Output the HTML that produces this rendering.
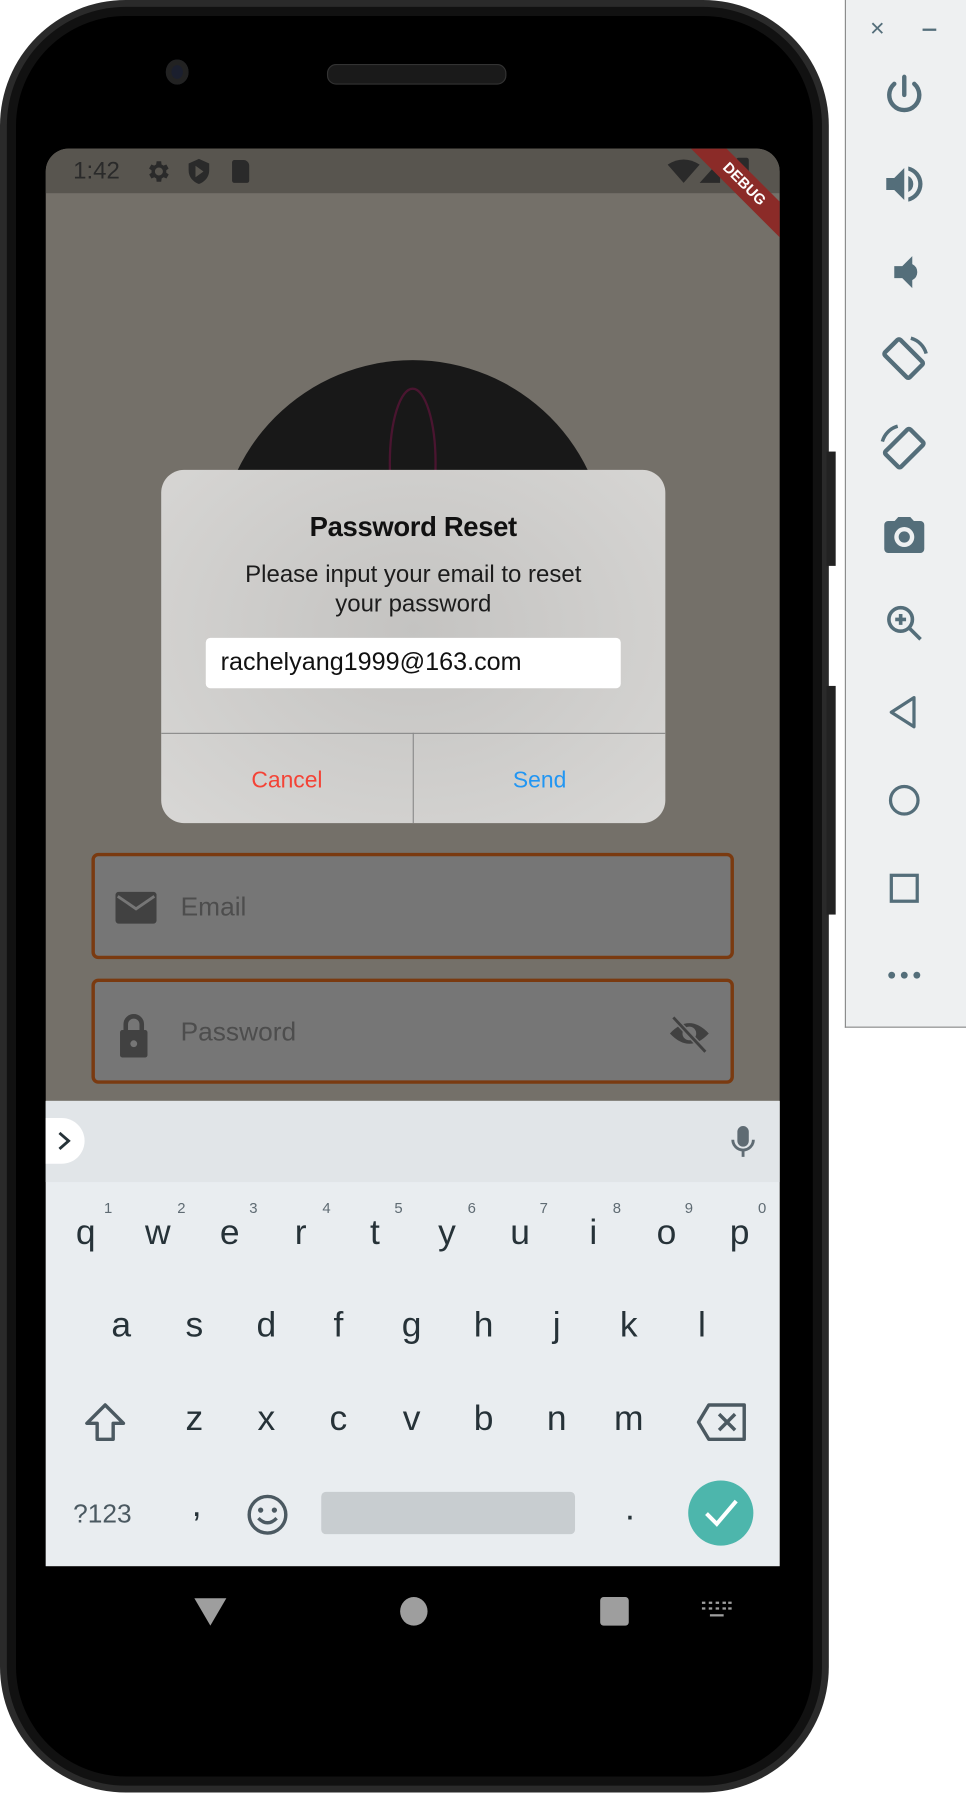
<!DOCTYPE html>
<html><head><meta charset="utf-8"><style>
html,body{margin:0;padding:0;background:#fff;width:966px;height:1792px;overflow:hidden}
#w{position:absolute;left:0;top:0;width:845px;height:1568px;transform:scale(1.14320);transform-origin:0 0;font-family:"Liberation Sans",sans-serif}
.a{position:absolute}
.k{position:absolute;font-size:31px;color:#263238;transform:translateX(-50%);line-height:1}
.n{position:absolute;font-size:13px;color:#5f6b73;line-height:1}
</style></head><body><div id="w">
<div class="a" style="left:0;top:0;width:725px;height:1568px;border-radius:110px;background:#2a2a2a"></div>
<div class="a" style="left:6px;top:6px;width:713px;height:1556px;border-radius:104px;background:#111"></div>
<div class="a" style="left:14px;top:14px;width:697px;height:1540px;border-radius:96px;background:#000"></div>
<div class="a" style="left:723px;top:395px;width:8px;height:100px;background:#222"></div>
<div class="a" style="left:723px;top:600px;width:8px;height:200px;background:#222"></div>
<div class="a" style="left:145px;top:52px;width:20px;height:22px;border-radius:50%;background:#1b1f2e;box-shadow:inset 0 0 0 5px #222"></div>
<div class="a" style="left:286px;top:56px;width:155px;height:16px;border-radius:8px;background:#1a1a1a;border:1px solid #333"></div>
<div class="a" style="left:40px;top:130px;width:642px;height:1240px;border-radius:20px 20px 0 0;background:#747069;overflow:hidden">
 <div class="a" style="left:0;top:0;width:642px;height:39px;background:#58554f"></div>
 <div class="a" style="left:24px;top:8px;font-size:21px;color:#2a2a2a">1:42</div>
 <svg class="a" style="left:86px;top:8px" width="24" height="24" viewBox="0 0 24 24"><path fill="#2a2a2a" d="M19.4 13a7.5 7.5 0 000-2l2.1-1.6-2-3.5-2.5 1a7.3 7.3 0 00-1.7-1L15 3h-4l-.4 2.9a7.3 7.3 0 00-1.7 1l-2.5-1-2 3.5L6.6 11a7.5 7.5 0 000 2l-2.1 1.6 2 3.5 2.5-1a7.3 7.3 0 001.7 1L11 21h4l.4-2.9a7.3 7.3 0 001.7-1l2.5 1 2-3.5zM13 15.5a3.5 3.5 0 110-7 3.5 3.5 0 010 7z"/></svg>
 <svg class="a" style="left:123px;top:8px" width="22" height="24" viewBox="0 0 22 24"><path fill="#2a2a2a" d="M11 1L2 5v6c0 6 4 10 9 12 5-2 9-6 9-12V5zM8 7l7 5-7 5z"/></svg>
 <div class="a" style="left:163px;top:10px;width:15px;height:20px;background:#2a2a2a;border-radius:2px 5px 2px 2px"></div>
 <svg class="a" style="left:544px;top:8px" width="30" height="24"><path fill="#2a2a2a" d="M0 6Q14-3 28 6L14 22z"/></svg>
 <svg class="a" style="left:572px;top:8px" width="18" height="24"><path fill="#2a2a2a" d="M18 2V22H0z"/></svg>
 <div class="a" style="left:604px;top:8px;width:11px;height:22px;background:#2a2a2a;border-radius:2px"></div>
 <div class="a" style="left:531px;top:20px;width:160px;height:22px;background:#8b2b28;transform:rotate(45deg);transform-origin:50% 50%;"><div style="text-align:center;font-size:13px;font-weight:bold;color:#fff;line-height:22px">DEBUG</div></div>
 <div class="a" style="left:151px;top:185px;width:340px;height:340px;border-radius:50%;background:#181818"></div>
 <svg class="a" style="left:190px;top:200px" width="280" height="120"><ellipse cx="131" cy="75" rx="20" ry="65" fill="none" stroke="#4a1530" stroke-width="2"/><ellipse cx="60" cy="100" rx="50" ry="14" fill="none" stroke="#25214a" stroke-width="2"/><ellipse cx="210" cy="100" rx="50" ry="14" fill="none" stroke="#1f3a2a" stroke-width="2"/></svg>
 <div class="a" style="left:40px;top:616px;width:556px;height:87px;border:3px solid #7a3a10;border-radius:6px;background:#767676"></div>
 <svg class="a" style="left:61px;top:650px" width="36" height="28" viewBox="0 0 36 28"><rect width="36" height="28" rx="3" fill="#414141"/><path d="M2 4l16 11 16-11" fill="none" stroke="#767676" stroke-width="2.5"/></svg>
 <div class="a" style="left:118px;top:650px;font-size:23px;color:#4d4d4d">Email</div>
 <div class="a" style="left:40px;top:726px;width:556px;height:86px;border:3px solid #7a3a10;border-radius:6px;background:#767676"></div>
 <svg class="a" style="left:64px;top:756px" width="26" height="40" viewBox="0 0 26 40"><path d="M6 16V10a7 7 0 0114 0v6" fill="none" stroke="#414141" stroke-width="4"/><rect x="1" y="15" width="24" height="24" rx="2" fill="#414141"/><circle cx="13" cy="27" r="3" fill="#767676"/></svg>
 <div class="a" style="left:118px;top:759px;font-size:23px;color:#4d4d4d">Password</div>
 <svg class="a" style="left:544px;top:756px" width="38" height="36" viewBox="0 0 38 36"><path d="M2 18Q19 0 36 18Q19 36 2 18z" fill="#414141"/><circle cx="19" cy="18" r="6" fill="#767676"/><path d="M5 4l28 30" stroke="#767676" stroke-width="5"/><path d="M5 4l28 30" stroke="#414141" stroke-width="2.5"/></svg>
</div>
<div class="a" style="left:141px;top:411px;width:441px;height:309px;border-radius:20px;background:radial-gradient(ellipse at 50% 45%,#c4c3c1 0%,#d0cfcd 60%,#d8d7d5 100%);overflow:hidden">
 <div class="a" style="left:0;width:441px;top:37px;text-align:center;font-size:24px;font-weight:bold;color:#111;letter-spacing:-0.3px">Password Reset</div>
 <div class="a" style="left:0;width:441px;top:79px;text-align:center;font-size:21px;line-height:26px;color:#1c1c1c">Please input your email to reset<br>your password</div>
 <div class="a" style="left:39px;top:147px;width:363px;height:44px;background:#fff;border-radius:4px"></div>
 <div class="a" style="left:52px;top:155px;font-size:22px;color:#111">rachelyang1999@163.com</div>
 <div class="a" style="left:0;top:230px;width:441px;height:1px;background:#8a8a8a"></div>
 <div class="a" style="left:220px;top:230px;width:1px;height:79px;background:#8a8a8a"></div>
 <div class="a" style="left:0;width:220px;top:261px;text-align:center;font-size:20px;color:#f44336">Cancel</div>
 <div class="a" style="left:221px;width:220px;top:261px;text-align:center;font-size:20px;color:#2196f3">Send</div>
</div>
<div class="a" style="left:40px;top:963px;width:642px;height:407px;background:#e9edf0"></div>
<div class="a" style="left:40px;top:963px;width:642px;height:71px;background:#e1e5e8"></div>
<div class="a" style="left:40px;top:978px;width:34px;height:40px;background:#fff;border-radius:0 20px 20px 0"></div>
<svg class="a" style="left:48px;top:988px" width="16" height="20"><path d="M4 3l8 7-8 7" fill="none" stroke="#263238" stroke-width="2.5"/></svg>
<svg class="a" style="left:638px;top:983px" width="24" height="32" viewBox="0 0 24 32"><rect x="7" y="2" width="10" height="18" rx="5" fill="#5f6b73"/><path d="M3 14a9 9 0 0018 0M12 23v6" fill="none" stroke="#5f6b73" stroke-width="2.5"/></svg>
<div class="k" style="left:75px;top:1062px">q</div><div class="n" style="left:91px;top:1050px">1</div>
<div class="k" style="left:138px;top:1062px">w</div><div class="n" style="left:155px;top:1050px">2</div>
<div class="k" style="left:201px;top:1062px">e</div><div class="n" style="left:218px;top:1050px">3</div>
<div class="k" style="left:263px;top:1062px">r</div><div class="n" style="left:282px;top:1050px">4</div>
<div class="k" style="left:328px;top:1062px">t</div><div class="n" style="left:345px;top:1050px">5</div>
<div class="k" style="left:391px;top:1062px">y</div><div class="n" style="left:409px;top:1050px">6</div>
<div class="k" style="left:455px;top:1062px">u</div><div class="n" style="left:472px;top:1050px">7</div>
<div class="k" style="left:519px;top:1062px">i</div><div class="n" style="left:536px;top:1050px">8</div>
<div class="k" style="left:583px;top:1062px">o</div><div class="n" style="left:599px;top:1050px">9</div>
<div class="k" style="left:647px;top:1062px">p</div><div class="n" style="left:663px;top:1050px">0</div>
<div class="k" style="left:106px;top:1143px">a</div><div class="k" style="left:170px;top:1143px">s</div><div class="k" style="left:233px;top:1143px">d</div><div class="k" style="left:296px;top:1143px">f</div><div class="k" style="left:360px;top:1143px">g</div><div class="k" style="left:423px;top:1143px">h</div><div class="k" style="left:487px;top:1143px">j</div><div class="k" style="left:550px;top:1143px">k</div><div class="k" style="left:614px;top:1143px">l</div>
<svg class="a" style="left:72px;top:1225px" width="40" height="40" viewBox="0 0 40 40"><path d="M20 4L4 20h9v14h14V20h9z" fill="none" stroke="#4b5961" stroke-width="3" stroke-linejoin="round"/></svg>
<div class="k" style="left:170px;top:1225px">z</div><div class="k" style="left:233px;top:1225px">x</div><div class="k" style="left:296px;top:1225px">c</div><div class="k" style="left:360px;top:1225px">v</div><div class="k" style="left:423px;top:1225px">b</div><div class="k" style="left:487px;top:1225px">n</div><div class="k" style="left:550px;top:1225px">m</div>
<svg class="a" style="left:608px;top:1226px" width="46" height="36" viewBox="0 0 46 36"><path d="M12 3h31v30H12L3 18z" fill="none" stroke="#4b5961" stroke-width="3" stroke-linejoin="round"/><path d="M21 11l14 14M35 11L21 25" stroke="#4b5961" stroke-width="3"/></svg>
<div class="a" style="left:64px;top:1311px;font-size:23px;color:#4b5961">?123</div>
<div class="k" style="left:172px;top:1300px">,</div>
<svg class="a" style="left:215px;top:1306px" width="38" height="38" viewBox="0 0 38 38"><circle cx="19" cy="19" r="16" fill="none" stroke="#4b5961" stroke-width="3"/><circle cx="13" cy="15" r="2.3" fill="#4b5961"/><circle cx="25" cy="15" r="2.3" fill="#4b5961"/><path d="M11 22q8 8 16 0" fill="none" stroke="#4b5961" stroke-width="3"/></svg>
<div class="a" style="left:281px;top:1305px;width:222px;height:37px;background:#c8cdd0;border-radius:4px"></div>
<div class="k" style="left:551px;top:1303px">.</div>
<div class="a" style="left:602px;top:1295px;width:57px;height:57px;border-radius:50%;background:#4db6ac"></div>
<svg class="a" style="left:614px;top:1308px" width="34" height="30"><path d="M4 16l9 9L30 5" fill="none" stroke="#fff" stroke-width="3.5"/></svg>
<svg class="a" style="left:170px;top:1396px" width="30" height="28"><path d="M0 2h28L14 26z" fill="#9e9e9e"/></svg>
<div class="a" style="left:350px;top:1397px;width:24px;height:25px;border-radius:50%;background:#9e9e9e"></div>
<div class="a" style="left:525px;top:1397px;width:25px;height:25px;border-radius:3px;background:#9e9e9e"></div>
<svg class="a" style="left:613px;top:1400px" width="28" height="18"><g fill="#9e9e9e"><rect x="1" y="1" width="3" height="2"/><rect x="7" y="1" width="3" height="2"/><rect x="13" y="1" width="3" height="2"/><rect x="19" y="1" width="3" height="2"/><rect x="24" y="1" width="3" height="2"/><rect x="1" y="6" width="3" height="2"/><rect x="7" y="6" width="3" height="2"/><rect x="13" y="6" width="3" height="2"/><rect x="19" y="6" width="3" height="2"/><rect x="24" y="6" width="3" height="2"/><rect x="8" y="12" width="12" height="2"/></g></svg>
<div class="a" style="left:739px;top:0;width:105px;height:898px;background:#eef0f1;border:1px solid #8a8a8a;border-top:none"></div>
<div class="a" style="left:761px;top:12px;font-size:22px;color:#546e7a">×</div>
<div class="a" style="left:807px;top:25px;width:12px;height:2px;background:#546e7a"></div>
<svg class="a" style="left:770px;top:62px" width="42" height="42" viewBox="0 0 24 24"><path d="M12 3v9M7 6.5a7.5 7.5 0 1010 0" fill="none" stroke="#546e7a" stroke-width="2.2" stroke-linecap="round"/></svg>
<svg class="a" style="left:770px;top:140px" width="42" height="42" viewBox="0 0 24 24"><path fill="#546e7a" d="M3 9v6h4l5 5V4L7 9zm13.5 3A4.5 4.5 0 0014 8v8a4.5 4.5 0 002.5-4zM14 3.2v2.1a7 7 0 010 13.4v2.1a9 9 0 000-17.6z"/></svg>
<svg class="a" style="left:770px;top:217px" width="42" height="42" viewBox="0 0 24 24"><path fill="#546e7a" d="M7 9v6h4l5 5V4l-5 5zm11.5 3A4.5 4.5 0 0016 8v8a4.5 4.5 0 002.5-4z"/></svg>
<svg class="a" style="left:768px;top:292px" width="46" height="46" viewBox="0 0 24 24"><rect x="6" y="4" width="10" height="16" rx="1" transform="rotate(-45 11 12) translate(1 0)" fill="none" stroke="#546e7a" stroke-width="2"/><path d="M15 2a10 10 0 017 7" fill="none" stroke="#546e7a" stroke-width="1.6"/></svg>
<svg class="a" style="left:768px;top:369px" width="46" height="46" viewBox="0 0 24 24"><rect x="7" y="4" width="10" height="16" rx="1" transform="rotate(45 12 12)" fill="none" stroke="#546e7a" stroke-width="2"/><path d="M2 9a10 10 0 017-7" fill="none" stroke="#546e7a" stroke-width="1.6"/></svg>
<svg class="a" style="left:770px;top:447px" width="42" height="42" viewBox="0 0 24 24"><path fill="#546e7a" d="M9 3L7.2 5H4a2 2 0 00-2 2v12a2 2 0 002 2h16a2 2 0 002-2V7a2 2 0 00-2-2h-3.2L15 3zm3 15a5 5 0 110-10 5 5 0 010 10zm0-2.2a2.8 2.8 0 100-5.6 2.8 2.8 0 000 5.6z"/></svg>
<svg class="a" style="left:772px;top:526px" width="38" height="38" viewBox="0 0 24 24"><circle cx="10" cy="10" r="6.5" fill="none" stroke="#546e7a" stroke-width="2"/><path d="M15 15l6 6M10 7v6M7 10h6" stroke="#546e7a" stroke-width="2"/></svg>
<svg class="a" style="left:774px;top:606px" width="34" height="34" viewBox="0 0 24 24"><path d="M18 3L4 12l14 9z" fill="none" stroke="#546e7a" stroke-width="2" stroke-linejoin="round"/></svg>
<svg class="a" style="left:774px;top:683px" width="34" height="34" viewBox="0 0 24 24"><circle cx="12" cy="12" r="8.5" fill="none" stroke="#546e7a" stroke-width="2"/></svg>
<svg class="a" style="left:774px;top:760px" width="34" height="34" viewBox="0 0 24 24"><rect x="4" y="4" width="16" height="16" fill="none" stroke="#546e7a" stroke-width="2"/></svg>
<svg class="a" style="left:774px;top:845px" width="34" height="16"><circle cx="6" cy="8" r="3" fill="#546e7a"/><circle cx="17" cy="8" r="3" fill="#546e7a"/><circle cx="28" cy="8" r="3" fill="#546e7a"/></svg>
</div></body></html>
